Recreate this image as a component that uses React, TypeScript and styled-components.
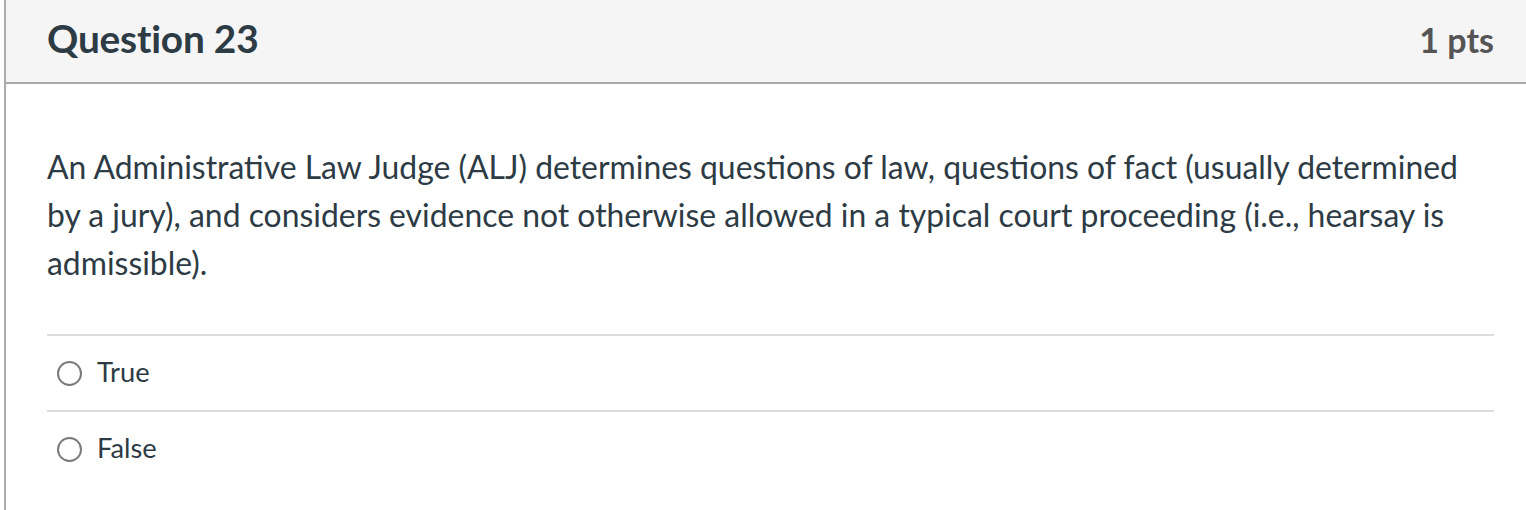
import React from "react";
import styled, { createGlobalStyle } from "styled-components";

const Global = createGlobalStyle`
  html, body { margin: 0; padding: 0; background: #fff; }
  body { font-family: Lato, "Noto Sans", sans-serif; overflow: hidden; }
`;

const Card = styled.div`
  margin-left: 4px;
  border-left: 2px solid #ababab;
  min-height: 510px;
  box-sizing: border-box;
`;

const Header = styled.header`
  height: 84px;
  box-sizing: border-box;
  background: #f5f5f5;
  border-bottom: 2px solid #a9a9a9;
  display: flex;
  align-items: center;
  justify-content: space-between;
  padding: 0 32px 6px 41px;
`;

const Title = styled.h2`
  margin: 0;
  font-size: 38.8px;
  font-weight: 700;
  color: #2d3b45;
  letter-spacing: -0.2px;
`;

const Points = styled.span`
  font-size: 34px;
  font-weight: 700;
  color: #555555;
  margin-top: 2px;
`;

const Body = styled.div`
  padding: 59px 32px 0 41px;
`;

const QuestionText = styled.p`
  margin: 0 0 47px;
  font-size: 31.9px;
  line-height: 48px;
  color: #2d3b45;
`;

const Answers = styled.div`
  display: flex;
  flex-direction: column;
`;

const AnswerRow = styled.label`
  display: flex;
  align-items: center;
  gap: 15px;
  height: 76px;
  box-sizing: border-box;
  border-top: 2px solid #dddddd;
  padding-left: 10px;
  padding-bottom: 3px;
  font-size: 27.3px;
  color: #2d3b45;
`;

const Radio = styled.span`
  width: 25px;
  height: 25px;
  box-sizing: border-box;
  border: 2px solid #7a7a7a;
  border-radius: 50%;
  flex: none;
  margin-top: 4px;
`;

export default function App() {
  return (
    <>
      <Global />
      <Card>
        <Header>
          <Title>Question 23</Title>
          <Points>1 pts</Points>
        </Header>
        <Body>
          <QuestionText>
            An Administrative Law Judge (ALJ) determines questions of law, questions of fact (usually determined
            by a jury), and considers evidence not otherwise allowed in a typical court proceeding (i.e., hearsay is
            admissible).
          </QuestionText>
          <Answers>
            <AnswerRow>
              <Radio />
              True
            </AnswerRow>
            <AnswerRow>
              <Radio />
              False
            </AnswerRow>
          </Answers>
        </Body>
      </Card>
    </>
  );
}
